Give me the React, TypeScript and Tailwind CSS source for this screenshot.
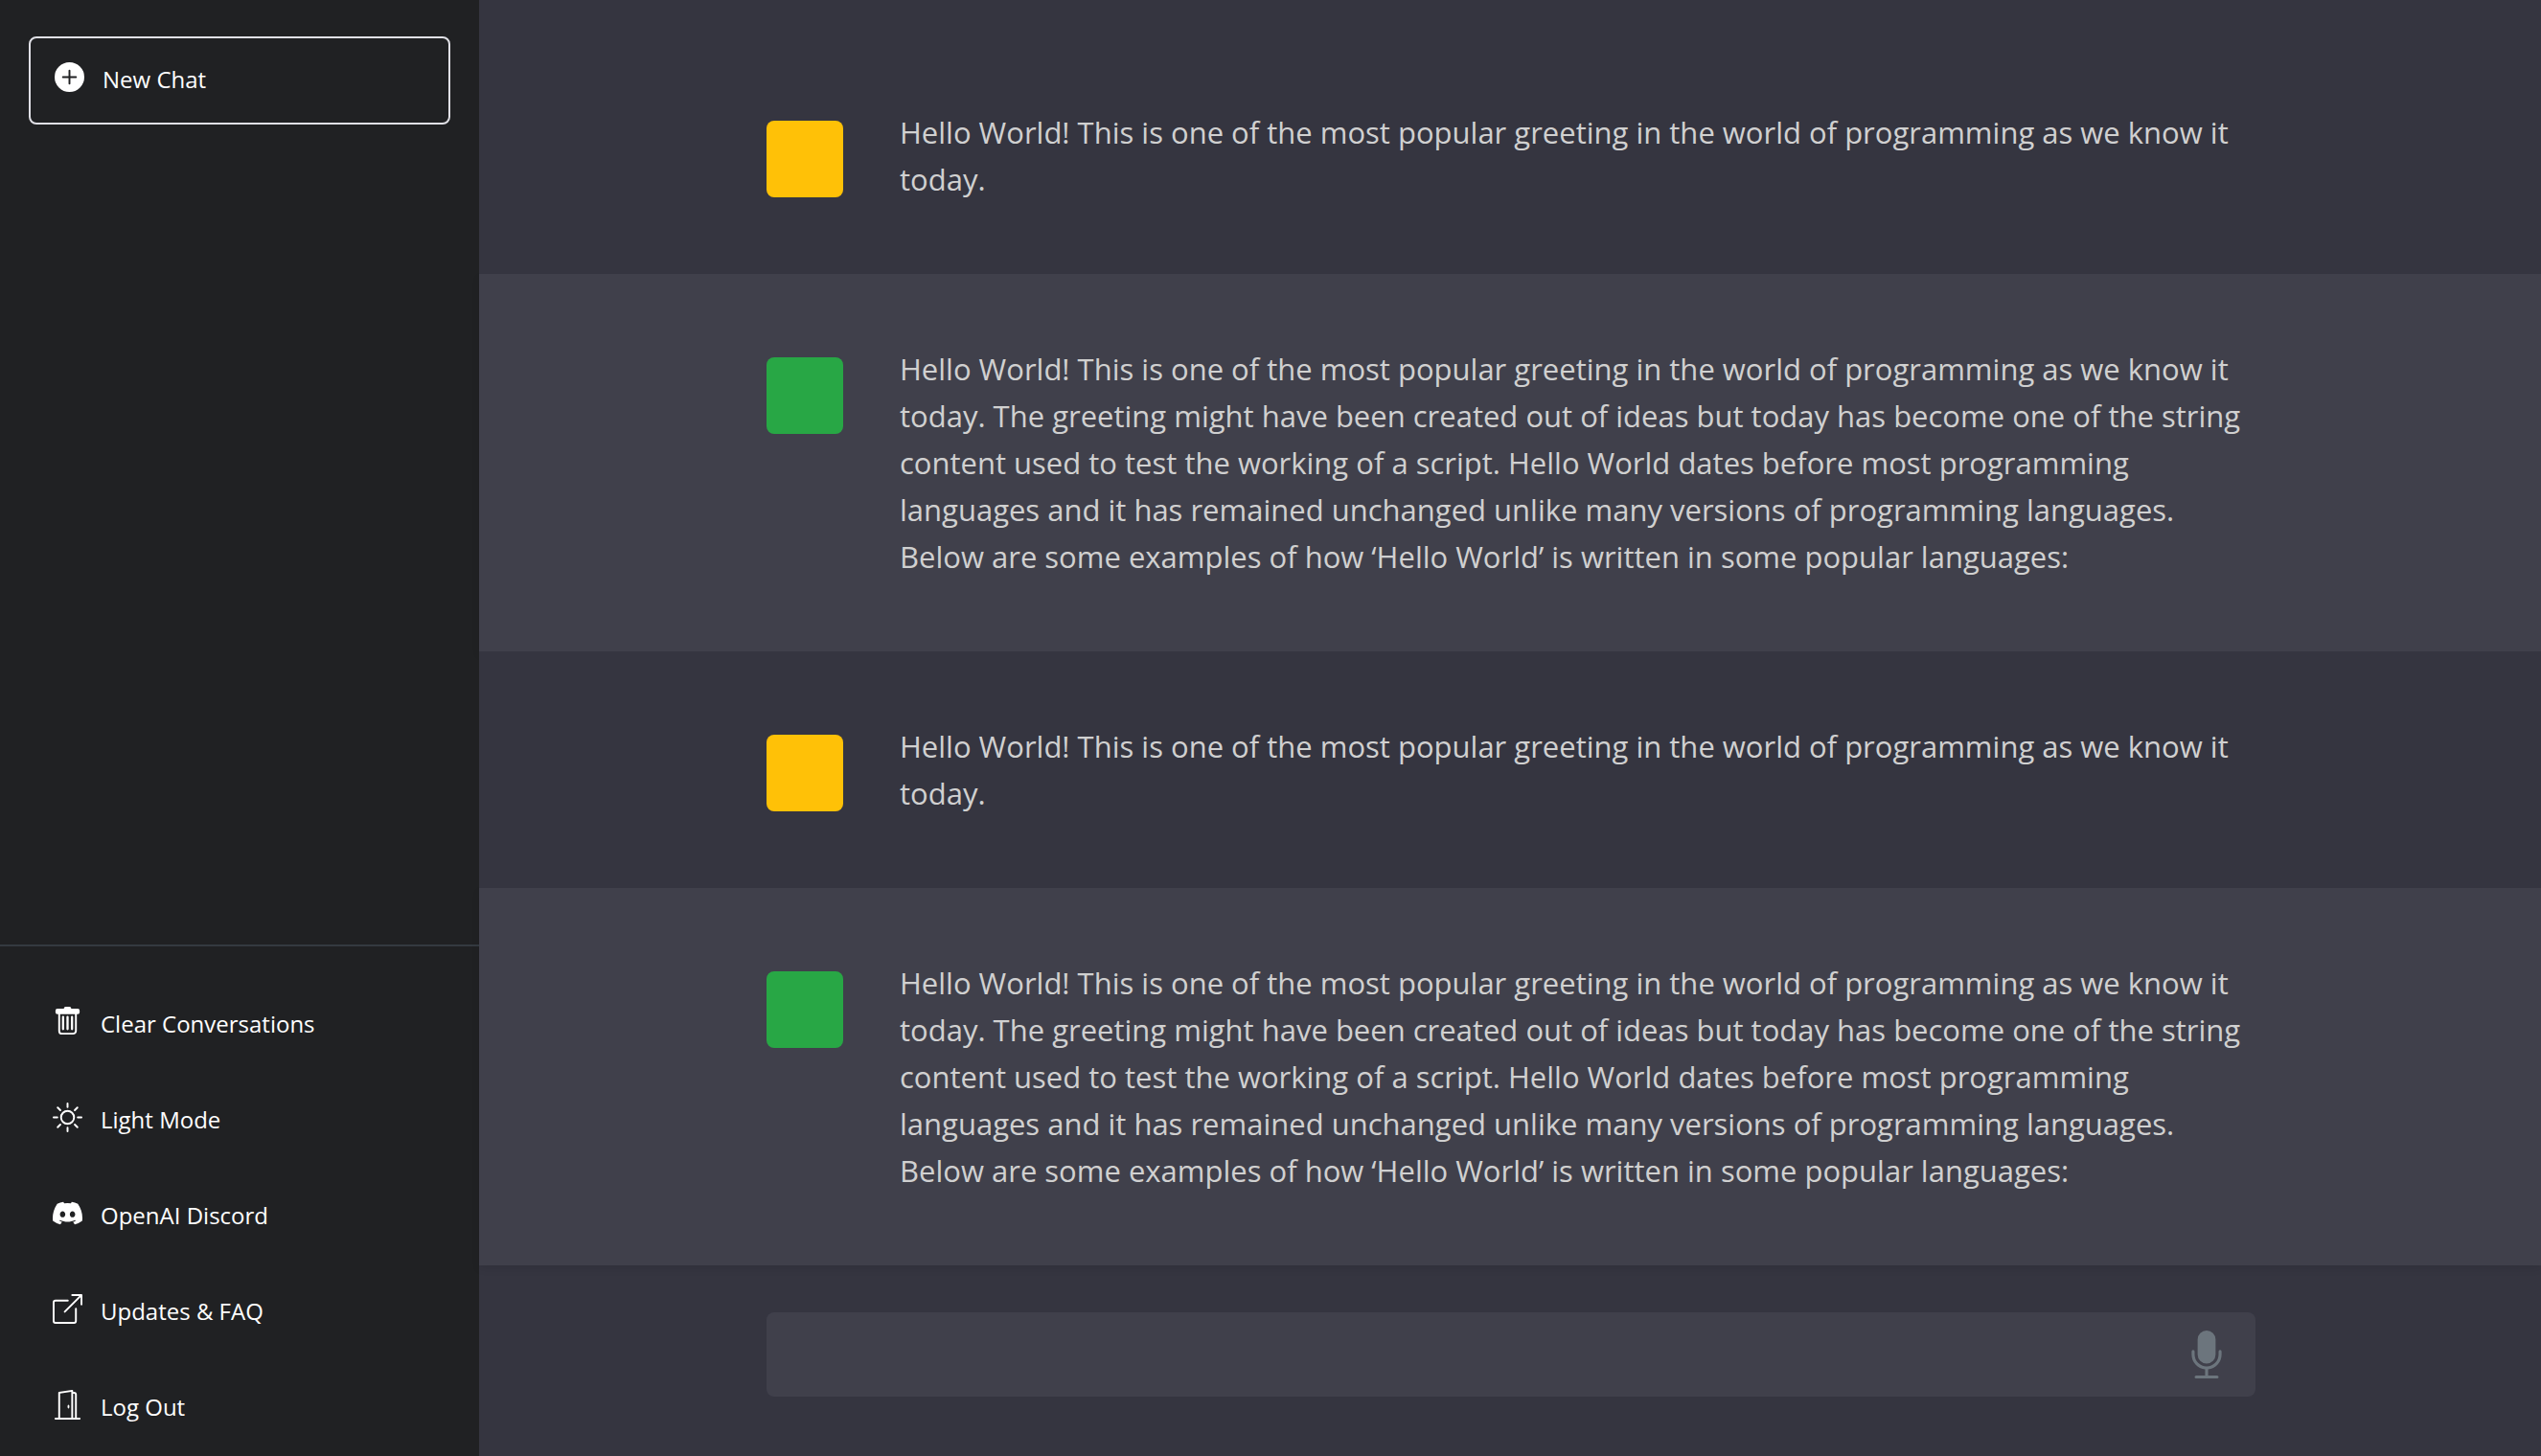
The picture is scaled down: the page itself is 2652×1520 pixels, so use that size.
import type { ReactNode } from "react";
import {
  BsBoxArrowUpRight,
  BsDiscord,
  BsDoorOpen,
  BsMicFill,
  BsPlusCircleFill,
  BsSun,
} from "react-icons/bs";

const PROMPT =
  "Hello World! This is one of the most popular greeting in the world of programming as we know it today.";

const REPLY =
  "Hello World! This is one of the most popular greeting in the world of programming as we know it today. The greeting might have been created out of ideas but today has become one of the string content used to test the working of a script. Hello World dates before most programming languages and it has remained unchanged unlike many versions of programming languages. Below are some examples of how ‘Hello World’ is written in some popular languages:";

const messages = [
  { from: "user", text: PROMPT },
  { from: "bot", text: REPLY },
  { from: "user", text: PROMPT },
  { from: "bot", text: REPLY },
];

function TrashIcon() {
  return (
    <svg viewBox="0 0 16 16" className="size-[31px]" fill="none" aria-hidden="true">
      <path
        fill="currentColor"
        d="M6 1a1 1 0 0 1 1-1h2a1 1 0 0 1 1 1h3.5a1 1 0 0 1 1 1v1a1 1 0 0 1-1 1h-11a1 1 0 0 1-1-1V2a1 1 0 0 1 1-1z"
      />
      <path
        stroke="currentColor"
        d="M3.500 3.500V13A1.500 1.500 0 0 0 5 14.500h6a1.500 1.500 0 0 0 1.500-1.500V3.500"
      />
      <path
        stroke="currentColor"
        strokeWidth="1.200"
        strokeLinecap="round"
        d="M5.600 5.500v6.500M8 5.500v6.500M10.400 5.500v6.500"
      />
    </svg>
  );
}

function NavItem({ icon, label }: { icon: ReactNode; label: string }) {
  return (
    <li>
      <a href="#" className="flex h-[100px] items-center gap-[19px] pl-[55px] text-2xl">
        {icon}
        <span className="pt-[5px]">{label}</span>
      </a>
    </li>
  );
}

function Sidebar() {
  return (
    <aside className="flex w-[500px] shrink-0 flex-col bg-[#202123] text-white">
      <div className="px-[30px] pt-[38px]">
        <button
          type="button"
          className="flex h-[92px] w-full items-center gap-[19px] rounded-lg border-2 border-[#e0e0e6] pb-[7px] pl-[25px] text-2xl"
        >
          <BsPlusCircleFill className="size-[31px]" />
          <span className="pt-[5px]">New Chat</span>
        </button>
      </div>
      <nav className="mt-auto border-t-2 border-[#343a40] pt-[28px] pb-1">
        <ul>
          <NavItem icon={<TrashIcon />} label="Clear Conversations" />
          <NavItem icon={<BsSun className="size-[31px]" />} label="Light Mode" />
          <NavItem icon={<BsDiscord className="size-[31px]" />} label="OpenAI Discord" />
          <NavItem icon={<BsBoxArrowUpRight className="size-[31px]" />} label="Updates & FAQ" />
          <NavItem icon={<BsDoorOpen className="size-[31px]" />} label="Log Out" />
        </ul>
      </nav>
    </aside>
  );
}

function Message({ from, text }: { from: string; text: string }) {
  const bot = from === "bot";
  return (
    <article
      className={
        bot
          ? "bg-[#40404b] pt-[75px] pr-10 pb-[74px] pl-[42px] shadow-[0_4px_8px_rgba(0,0,0,0.075)]"
          : "relative bg-[#353540] pt-[75px] pr-10 pb-[74px] pl-[42px]"
      }
    >
      <div className="mx-auto flex max-w-[1554px] items-start gap-[59px]">
        <div
          className={
            bot
              ? "mt-3 size-20 shrink-0 rounded-lg bg-[#28a745]"
              : "mt-3 size-20 shrink-0 rounded-lg bg-[#ffc107]"
          }
        />
        <p className="text-[31px] leading-[49px] text-[#d0d0d0]">{text}</p>
      </div>
    </article>
  );
}

export default function App() {
  return (
    <div className="flex min-h-screen bg-[#353540] font-['Open_Sans','Noto_Sans',sans-serif]">
      <Sidebar />
      <main className="flex min-w-0 flex-1 flex-col">
        <section className="pt-[39px]">
          {messages.map((m, i) => (
            <Message key={i} from={m.from} text={m.text} />
          ))}
        </section>
        <form className="mt-auto pr-10 pb-[62px] pl-[42px]">
          <div className="mx-auto flex h-[88px] max-w-[1554px] items-center rounded-lg bg-[#40404b] pr-[26px]">
            <input
              type="text"
              aria-label="Message"
              className="h-full min-w-0 flex-1 bg-transparent px-6 text-[31px] text-[#d0d0d0] outline-none"
            />
            <button type="button" aria-label="Voice input" className="text-[#6c757d]">
              <BsMicFill className="size-[50px]" />
            </button>
          </div>
        </form>
      </main>
    </div>
  );
}
